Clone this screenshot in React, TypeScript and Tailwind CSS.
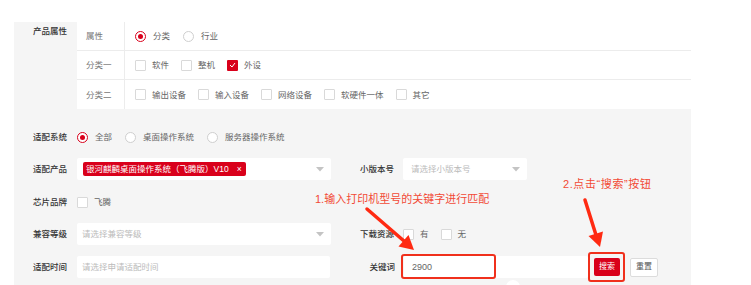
import React from "react";

const FONT = "font-['Liberation_Sans','Noto_Sans_CJK_SC',sans-serif]";

function Radio({ checked }: { checked?: boolean }) {
  return checked ? (
    <span className="w-[11px] h-[11px] rounded-full border border-[#d9001b] bg-white flex items-center justify-center shrink-0">
      <span className="w-[5px] h-[5px] rounded-full bg-[#d9001b]" />
    </span>
  ) : (
    <span className="w-[11px] h-[11px] rounded-full border border-[#cfcfcf] bg-white shrink-0" />
  );
}

function Check({ checked }: { checked?: boolean }) {
  return checked ? (
    <span className="w-[11px] h-[11px] rounded-[1px] bg-[#d9001b] flex items-center justify-center shrink-0">
      <svg width="7" height="6" viewBox="0 0 7 6">
        <path d="M1 3 L3 5 L6 1" fill="none" stroke="#fff" strokeWidth="1" />
      </svg>
    </span>
  ) : (
    <span className="w-[11px] h-[11px] rounded-[1px] border border-[#d9d9d9] bg-white shrink-0" />
  );
}

function RadioOpt({ label, checked }: { label: string; checked?: boolean }) {
  return (
    <span className="flex items-center gap-[7px] mr-[13px]">
      <Radio checked={checked} />
      <span className="text-[#666]">{label}</span>
    </span>
  );
}

function CheckOpt({ label, checked }: { label: string; checked?: boolean }) {
  return (
    <span className="flex items-center gap-[6px] mr-[12px]">
      <Check checked={checked} />
      <span className="text-[#666]">{label}</span>
    </span>
  );
}

function Caret() {
  return (
    <svg width="8" height="5" viewBox="0 0 8 5" className="shrink-0">
      <path d="M0 0 L8 0 L4 4.5 Z" fill="#c4c4c4" />
    </svg>
  );
}

function Label({ children }: { children: React.ReactNode }) {
  return (
    <div className="w-[63px] pl-[19px] shrink-0 text-[#333] font-medium">{children}</div>
  );
}

function RightLabel({ children, w = 72 }: { children: React.ReactNode; w?: number }) {
  return (
    <div
      className={`${w === 72 ? "w-[72px]" : "w-[74px]"} pr-[9px] text-right shrink-0 text-[#333] font-medium`}
    >
      {children}
    </div>
  );
}

export default function App() {
  return (
    <div
      className={`relative w-[751px] h-[285px] overflow-hidden bg-white pt-[22px] pl-[14px] text-[8.5px] leading-[12px] ${FONT}`}
    >
      <div className="w-[677px] h-[263px] bg-[#f5f5f5] flex flex-col">
        {/* Section 1 */}
        <div className="flex">
          <div className="w-[63px] pl-[19px] pt-[3px] text-[#333] font-medium">产品属性</div>
          <div className="w-[614px] bg-white flex flex-col">
            <div className="flex h-[29px] border-b border-[#ececec]">
              <div className="w-[48px] border-r border-[#ececec] flex items-center pl-[9px] text-[#777]">属性</div>
              <div className="flex items-center pl-[10px]">
                <RadioOpt label="分类" checked />
                <RadioOpt label="行业" />
              </div>
            </div>
            <div className="flex h-[29px] border-b border-[#ececec]">
              <div className="w-[48px] border-r border-[#ececec] flex items-center pl-[9px] text-[#777]">分类一</div>
              <div className="flex items-center pl-[10px]">
                <CheckOpt label="软件" />
                <CheckOpt label="整机" />
                <CheckOpt label="外设" checked />
              </div>
            </div>
            <div className="flex h-[29px]">
              <div className="w-[48px] border-r border-[#ececec] flex items-center pl-[9px] text-[#777]">分类二</div>
              <div className="flex items-center pl-[10px]">
                <CheckOpt label="输出设备" />
                <CheckOpt label="输入设备" />
                <CheckOpt label="网络设备" />
                <CheckOpt label="软硬件一体" />
                <CheckOpt label="其它" />
              </div>
            </div>
          </div>
        </div>

        {/* Section 2 */}
        <div className="flex items-center h-[22px] mt-[17px]">
          <Label>适配系统</Label>
          <RadioOpt label="全部" checked />
          <RadioOpt label="桌面操作系统" />
          <RadioOpt label="服务器操作系统" />
        </div>

        <div className="flex items-center h-[22px] mt-[10px]">
          <Label>适配产品</Label>
          <div className="w-[254px] h-[22px] bg-white rounded-[2px] flex items-center justify-between pl-[6px] pr-[7px]">
            <span className="h-[14px] bg-[#d9001b] rounded-[2px] text-white flex items-center pl-[3px] pr-[4px] gap-[8px]">
              <span>银河麒麟桌面操作系统（飞腾版）V10</span>
              <span>×</span>
            </span>
            <Caret />
          </div>
          <RightLabel>小版本号</RightLabel>
          <div className="w-[124px] h-[22px] bg-white rounded-[2px] flex items-center justify-between pl-[8px] pr-[7px]">
            <span className="text-[#bbb]">请选择小版本号</span>
            <Caret />
          </div>
        </div>

        <div className="flex items-center h-[22px] mt-[11px]">
          <Label>芯片品牌</Label>
          <CheckOpt label="飞腾" />
        </div>

        <div className="flex items-center h-[22px] mt-[10px]">
          <Label>兼容等级</Label>
          <div className="w-[254px] h-[22px] bg-white rounded-[2px] flex items-center justify-between pl-[5px] pr-[7px]">
            <span className="text-[#bbb]">请选择兼容等级</span>
            <Caret />
          </div>
          <RightLabel>下载资源</RightLabel>
          <CheckOpt label="有" />
          <CheckOpt label="无" />
        </div>

        <div className="flex items-center h-[22px] mt-[11px]">
          <Label>适配时间</Label>
          <div className="w-[253px] h-[22px] bg-white rounded-[2px] flex items-center pl-[5px]">
            <span className="text-[#bbb]">请选择申请适配时间</span>
          </div>
          <RightLabel w={73}>关键词</RightLabel>
          <div className="w-[184px] h-[22px] bg-white rounded-[2px] flex items-center pl-[8px] text-[#666] text-[9px]">
            2900
          </div>
          <button className="ml-[6px] w-[26px] h-[18px] bg-[#d9001b] rounded-[2px] text-white text-[8px] flex items-center justify-center">
            搜索
          </button>
          <button className="ml-[10px] w-[28px] h-[19px] bg-white border border-[#dcdcdc] rounded-[2px] text-[#555] text-[8px] flex items-center justify-center">
            重置
          </button>
        </div>
      </div>

      {/* annotations */}
      <div className="absolute left-[315px] top-[193px] text-[11px] leading-[13px] text-[#f24a35] whitespace-nowrap">
        1.输入打印机型号的关键字进行匹配
      </div>
      <div className="absolute left-[563px] top-[178px] text-[11px] leading-[13px] tracking-[0.6px] text-[#f24a35] whitespace-nowrap">
        2.点击“搜索”按钮
      </div>
      <div className="absolute left-[401px] top-[254px] w-[95px] h-[25px] border-2 border-[#f0301c] rounded-[3px]" />
      <div className="absolute left-[588px] top-[252px] w-[37px] h-[30px] border-2 border-[#f0301c] rounded-[3px]" />
      <div className="absolute left-[506px] top-[280px] w-[14px] h-[14px] rounded-full bg-white" />

      <svg className="absolute left-0 top-0 pointer-events-none" width="751" height="285" viewBox="0 0 751 285">
        <line x1="367" y1="209" x2="404" y2="241" stroke="#ff2a12" strokeWidth="3.5" strokeLinecap="round" />
        <polygon points="414,250 398.5,246.5 408.5,235" fill="#ff2a12" />
        <line x1="585" y1="200" x2="596" y2="235" stroke="#ff2a12" strokeWidth="3.5" strokeLinecap="round" />
        <polygon points="600,247 588.5,236 603,231.5" fill="#ff2a12" />
      </svg>
    </div>
  );
}
